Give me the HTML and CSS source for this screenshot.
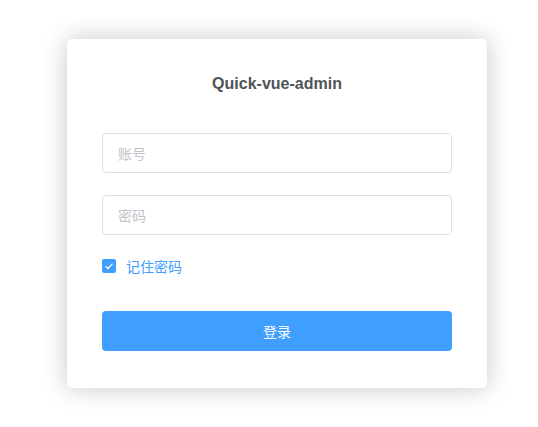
FILE: index.html
```html
<!DOCTYPE html>
<html lang="zh">
<head>
<meta charset="utf-8">
<title>Quick-vue-admin</title>
<link rel="stylesheet" href="styles.css">
</head>
<body>
<div class="page">
  <form class="login-card">
    <h3 class="title">Quick-vue-admin</h3>
    <div class="form-item">
      <input class="input" type="text" placeholder="账号">
    </div>
    <div class="form-item">
      <input class="input" type="password" placeholder="密码">
    </div>
    <label class="remember">
      <span class="checkbox">
        <svg viewBox="0 0 14 14" width="14" height="14"><path d="M3.6 7.2 L6 9.5 L10.5 4.6" fill="none" stroke="#fff" stroke-width="1.3"/></svg>
      </span>
      <span class="remember-text">记住密码</span>
    </label>
    <div class="form-item">
      <button class="btn" type="button">登录</button>
    </div>
  </form>
</div>
</body>
</html>
```
FILE: styles.css
```css
html, body {
  margin: 0;
  padding: 0;
  background: #fff;
}
body {
  font-family: "Liberation Sans", "Noto Sans CJK SC", sans-serif;
}
.page {
  display: flex;
  justify-content: center;
  align-items: flex-start;
  min-height: 427px;
  box-sizing: border-box;
  padding: 39px 0 0 16px;
}
.login-card {
  width: 420px;
  box-sizing: border-box;
  padding: 35px 35px 15px;
  background: #fff;
  border-radius: 5px;
  box-shadow: 0 0 25px #cac6c6;
  display: flex;
  flex-direction: column;
}
.title {
  margin: 1px 0 40px;
  text-align: center;
  font-size: 16px;
  line-height: 18px;
  font-weight: bold;
  color: #505458;
}
.form-item {
  margin-bottom: 22px;
}
.input {
  display: block;
  width: 100%;
  box-sizing: border-box;
  height: 40px;
  border: 1px solid #dcdfe6;
  border-radius: 4px;
  padding: 0 15px;
  font-size: 14px;
  font-family: "Noto Sans CJK SC", "Liberation Sans", sans-serif;
  color: #606266;
  outline: none;
}
.input::placeholder {
  color: #c0c4cc;
}
.remember {
  display: flex;
  align-items: center;
  height: 18px;
  margin: 0 0 36px;
  gap: 10px;
}
.checkbox {
  width: 14px;
  height: 14px;
  background: #409eff;
  border-radius: 2px;
  display: block;
}
.checkbox svg {
  display: block;
}
.remember-text {
  font-size: 14px;
  color: #409eff;
  font-family: "Noto Sans CJK SC", sans-serif;
  line-height: 18px;
}
.btn {
  display: block;
  width: 100%;
  height: 40px;
  border: none;
  border-radius: 4px;
  background: #409eff;
  color: #fff;
  font-size: 14px;
  font-family: "Noto Sans CJK SC", sans-serif;
  cursor: pointer;
}
```
